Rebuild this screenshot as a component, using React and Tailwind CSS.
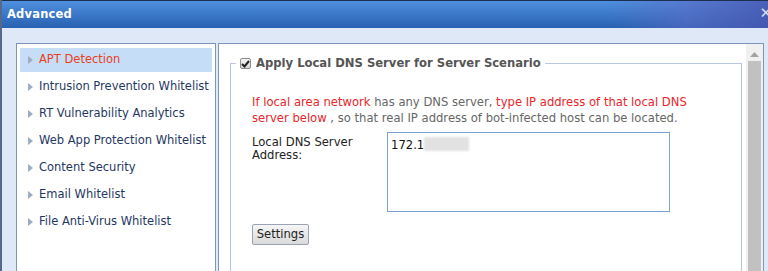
import React from "react";

const menuItems = [
  "APT Detection",
  "Intrusion Prevention Whitelist",
  "RT Vulnerability Analytics",
  "Web App Protection Whitelist",
  "Content Security",
  "Email Whitelist",
  "File Anti-Virus Whitelist",
];

const font = { fontFamily: '"DejaVu Sans", Verdana, sans-serif' };

export default function App() {
  return (
    <div
      className="w-[768px] h-[271px] overflow-hidden bg-[#dfe8f6] border-l-2 border-[#56698a] flex flex-col"
      style={font}
    >
      {/* Title bar */}
      <div className="relative h-[28px] shrink-0 border-t border-[#1c2f4f] bg-gradient-to-b from-[#4f90de] to-[#2861b1] flex items-center">
        <div className="absolute inset-y-0 right-0 w-[160px] bg-gradient-to-r from-transparent via-[#5a6ac4]/60 to-[#4a55b0]/80" />
        <span className="relative pl-[5px] text-white font-bold text-[11.5px] tracking-[0.2px]">
          Advanced
        </span>
        <span className="absolute right-[-4px] top-[5px] text-[#d8dcf4] text-[15px] font-bold leading-none">
          ✕
        </span>
      </div>

      {/* Body */}
      <div className="flex flex-1 pt-[15px] pl-[14px] min-h-0">
        {/* Left navigation */}
        <div className="w-[200px] border-t border-x border-[#7b95bd] bg-white pt-[4px] px-[3px]">
          {menuItems.map((item, i) => (
            <div
              key={item}
              className={`h-6 mb-[3px] flex items-center pl-[8px] text-[11.5px] whitespace-nowrap ${
                i === 0 ? "bg-[#c6ddf7] text-[#e8401c]" : "text-[#1f3763]"
              }`}
            >
              <svg width="5" height="8" viewBox="0 0 5 8" className="mr-[6px] shrink-0">
                <path d="M0 0 L5 4 L0 8 Z" fill="#9cadc4" />
              </svg>
              {item}
            </div>
          ))}
        </div>

        {/* Right panel */}
        <div className="ml-[2px] w-[546px] border-t border-x border-[#7b95bd] bg-white flex">
          <div className="flex-1 pl-[11px] pr-[4px] pt-[11px]">
            <fieldset className="border border-[#b8c7db] h-[230px] p-0 m-0">
              <legend className="ml-[5px] px-[4px] flex items-center text-[11.6px] font-bold text-[#555]">
                <span className="w-[11px] h-[11px] rounded-[2px] border border-[#8d8d8d] bg-gradient-to-b from-[#f4f4f4] to-[#d4d4d4] flex items-center justify-center mr-[5px]">
                  <svg width="9" height="8" viewBox="0 0 9 8">
                    <path d="M1 4 L3.5 6.5 L8 1" stroke="#222" strokeWidth="2" fill="none" />
                  </svg>
                </span>
                Apply Local DNS Server for Server Scenario
              </legend>

              <div className="pl-[21px] pr-4">
                <p className="mt-[22px] text-[11.6px] leading-[16px] text-[#666]">
                  <span className="text-[#e8262a]">If local area network</span> has any DNS server,{" "}
                  <span className="text-[#e8262a]">type IP address of that local DNS server below</span> , so that
                  real IP address of bot-infected host can be located.
                </p>

                <div className="mt-[6px] flex">
                  <div className="w-[135px] text-[11.6px] leading-[13px] text-[#222] pt-[4px]">
                    Local DNS Server
                    <br />
                    Address:
                  </div>
                  <div className="w-[283px] h-[80px] border border-[#7fa3cf] px-[3px] pt-[4px] text-[11.6px] text-[#111] flex items-start">
                    <span>172.1</span>
                    <span className="inline-block w-[45px] h-[14px] bg-[#e2e2e2] blur-[1px]" />
                  </div>
                </div>

                <button className="mt-[12px] w-[57px] h-[21px] rounded-[2px] border border-[#9aa3b3] bg-gradient-to-b from-[#f6f6f6] to-[#dadada] text-[11.6px] text-[#222]">
                  Settings
                </button>
              </div>
            </fieldset>
          </div>

          {/* Scrollbar */}
          <div className="w-[17px] bg-[#f0f0f0] flex flex-col items-center">
            <svg width="9" height="5" viewBox="0 0 9 5" className="mt-[8px]">
              <path d="M0 5 L4.5 0 L9 5 Z" fill="#a3a3a3" />
            </svg>
            <div className="mt-[4px] w-[13px] flex-1 bg-[#c1c1c1]" />
          </div>
        </div>
      </div>
    </div>
  );
}
